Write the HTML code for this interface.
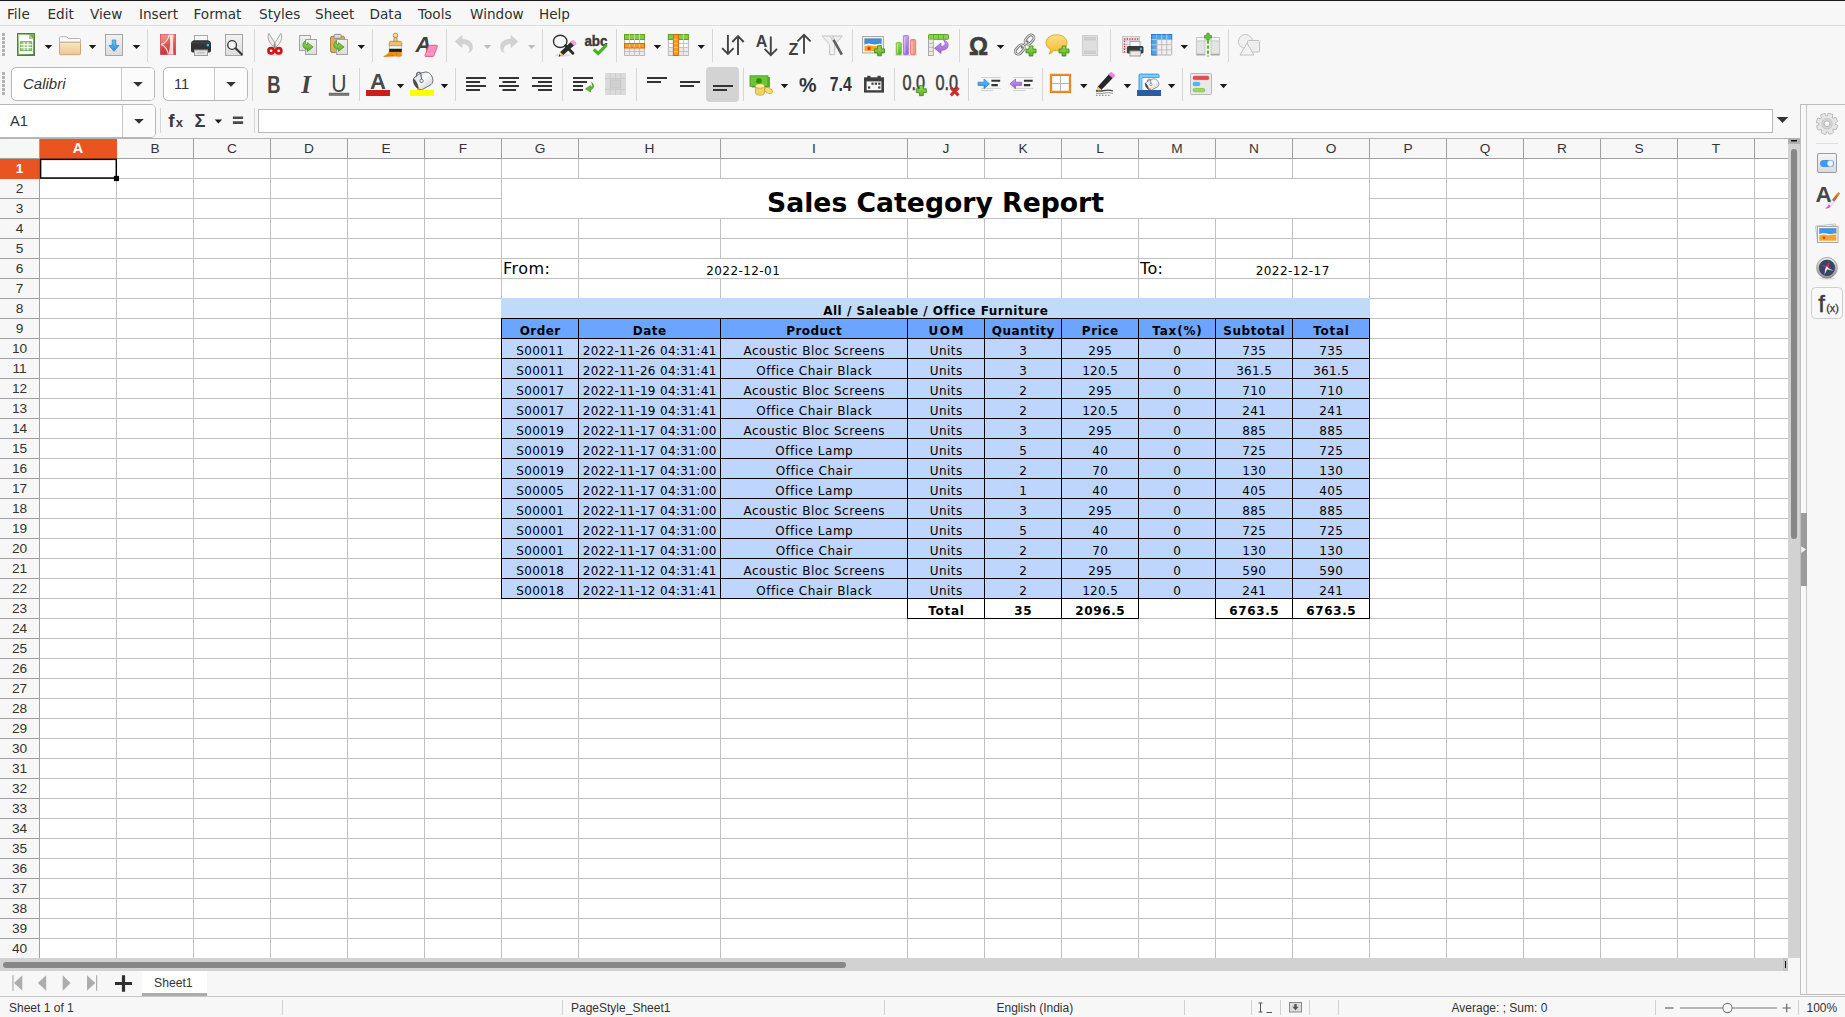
<!DOCTYPE html>
<html lang="en"><head><meta charset="utf-8"><title>Sales Category Report - LibreOffice Calc</title>
<style>
*{box-sizing:border-box}
html,body{margin:0;padding:0}
body{width:1845px;height:1017px;overflow:hidden;background:#f7f7f7;position:relative;font-family:'DejaVu Sans','Liberation Sans',sans-serif;color:#333;font-size:13.5px}
.a{position:absolute}
.menu span{position:absolute;top:5px;font-size:13.6px;line-height:18px;color:#303030;white-space:nowrap}
.vl{position:absolute;width:1px;background:#c0c0c0}
.hl{position:absolute;height:1px;background:#c0c0c0}
.ch{position:absolute;top:139px;height:19px;line-height:19px;text-align:center;font-size:13.7px;color:#333;font-family:'Liberation Sans','DejaVu Sans',sans-serif}
.rh{position:absolute;left:0;width:39px;height:19px;line-height:19px;text-align:center;font-size:13.7px;color:#333;font-family:'Liberation Sans','DejaVu Sans',sans-serif}
.c{position:absolute;font-family:'DejaVu Sans','Liberation Sans',sans-serif;font-size:12px;color:#000;text-align:center;white-space:nowrap;line-height:19px;height:19px}
.b{font-weight:bold}
.sep{position:absolute;width:1px;background:#d4d4d4}
.sb{position:absolute;top:998px;height:20px;line-height:20px;font-size:12px;color:#333;white-space:nowrap;font-family:'Liberation Sans','DejaVu Sans',sans-serif}
.bx{position:absolute;font-family:'Liberation Sans','DejaVu Sans',sans-serif;font-size:14.67px;line-height:20px;color:#333;white-space:nowrap}
.sbs{position:absolute;top:1000px;height:15px;width:1px;background:#d0d0d0}

</style></head><body>
<div class="a" style="left:0;top:0;width:1845px;height:1px;background:#1a1a1a"></div>
<div class="menu">
<span style="left:7px">File</span>
<span style="left:47.5px">Edit</span>
<span style="left:90px">View</span>
<span style="left:139px">Insert</span>
<span style="left:193.5px">Format</span>
<span style="left:259px">Styles</span>
<span style="left:315px">Sheet</span>
<span style="left:369.5px">Data</span>
<span style="left:418px">Tools</span>
<span style="left:470px">Window</span>
<span style="left:539px">Help</span>
</div>
<div class="a" style="left:0;top:25px;width:1845px;height:1px;background:#dcdcdc"></div>
<div class="a" style="left:11px;top:67px;width:144px;height:34px;border:1px solid #b8b8b8;border-radius:5px;background:#fff"></div>
<div class="a" style="left:121px;top:68px;width:1px;height:32px;background:#c8c8c8"></div>
<div class="a" style="left:122px;top:68px;width:32px;height:32px;background:#fbfbfb;border-radius:0 4px 4px 0"></div>
<div class="bx" style="left:23px;top:74px;font-style:italic;font-size:15px">Calibri</div>
<div class="a" style="left:163px;top:67px;width:85px;height:34px;border:1px solid #b8b8b8;border-radius:5px;background:#fff"></div>
<div class="a" style="left:214px;top:68px;width:1px;height:32px;background:#c8c8c8"></div>
<div class="a" style="left:215px;top:68px;width:32px;height:32px;background:#fbfbfb;border-radius:0 4px 4px 0"></div>
<div class="bx" style="left:174px;top:74px">11</div>
<div class="a" style="left:-4px;top:104px;width:160px;height:34px;border:1px solid #b8b8b8;border-radius:5px;background:#fff"></div>
<div class="a" style="left:122px;top:105px;width:1px;height:32px;background:#c8c8c8"></div>
<div class="a" style="left:123px;top:105px;width:32px;height:32px;background:#fbfbfb;border-radius:0 4px 4px 0"></div>
<div class="bx" style="left:10px;top:111px">A1</div>
<div class="a" style="left:258px;top:109px;width:1515px;height:24px;border:1px solid #b8b8b8;background:#fff"></div>
<svg class="a" style="left:0;top:26px" width="1300" height="38" viewBox="0 26 1300 38"><defs>
<linearGradient id="gDoc" x1="0" y1="0" x2="0" y2="1"><stop offset="0" stop-color="#f2f2f2"/><stop offset="1" stop-color="#dcdcdc"/></linearGradient>
<linearGradient id="gFold" x1="0" y1="0" x2="0" y2="1"><stop offset="0" stop-color="#f9e6c6"/><stop offset="1" stop-color="#ecc790"/></linearGradient>
<linearGradient id="gPdf" x1="0" y1="0" x2="0" y2="1"><stop offset="0" stop-color="#f27a63"/><stop offset="1" stop-color="#c8323f"/></linearGradient>
<linearGradient id="gGrn" x1="0" y1="0" x2="0" y2="1"><stop offset="0" stop-color="#9bdc5a"/><stop offset="1" stop-color="#5aae22"/></linearGradient>
<linearGradient id="gBub" x1="0" y1="0" x2="0" y2="1"><stop offset="0" stop-color="#fbe08a"/><stop offset="1" stop-color="#f3b728"/></linearGradient>
<linearGradient id="gBlu" x1="0" y1="0" x2="0" y2="1"><stop offset="0" stop-color="#6cc4f6"/><stop offset="1" stop-color="#2f8cdc"/></linearGradient>
<linearGradient id="gNew" x1="0" y1="0" x2="1" y2="1"><stop offset="0" stop-color="#a3cc90"/><stop offset="1" stop-color="#4f8a3c"/></linearGradient>
<linearGradient id="gPur" x1="0" y1="0" x2="0" y2="1"><stop offset="0" stop-color="#c9a0f0"/><stop offset="1" stop-color="#9a5fd6"/></linearGradient>
<linearGradient id="gMet" x1="0" y1="0" x2="1" y2="1"><stop offset="0" stop-color="#c9ccd0"/><stop offset="0.450" stop-color="#fbfbfb"/><stop offset="1" stop-color="#c3c6ca"/></linearGradient>
<g id="plus"><path d="M3.6 0.5h3.8v3.1h3.1v3.8h-3.1v3.1h-3.8v-3.1h-3.1v-3.8h3.1z" fill="url(#gGrn)" stroke="#3f8d17" stroke-width="0.9"/></g>
</defs><rect x="2" y="33" width="3" height="3" fill="#b4b4b4"/><rect x="2" y="37" width="3" height="3" fill="#b4b4b4"/><rect x="2" y="41" width="3" height="3" fill="#b4b4b4"/><rect x="2" y="45" width="3" height="3" fill="#b4b4b4"/><rect x="2" y="49" width="3" height="3" fill="#b4b4b4"/><rect x="2" y="53" width="3" height="3" fill="#b4b4b4"/><g transform="translate(14 32)"><rect x="3.500" y="1.500" width="17" height="22" fill="url(#gNew)" stroke="#4d8339"/><path d="M4.900 2.900h10.200l4 4v15.200h-14.200z" fill="#fff"/><path d="M15.100 2.900l4 4h-4z" fill="#9cc98a"/><rect x="6.300" y="9.700" width="11.400" height="8.800" fill="#9ccd85" stroke="#6aa551" stroke-width="0.900"/><path d="M6.300 12.700h11.400M6.300 15.600h11.400M10.100 10v8.500M13.900 10v8.500" stroke="#fff" stroke-width="1"/></g><g transform="translate(58 32)"><path d="M1.500 10.500v-4.800q0-1 1-1h6.300l1.500 1.800h11.200q1 0 1 1v3z" fill="#f8f8f8" stroke="#b5b5b5"/><rect x="1.500" y="10.200" width="21" height="12.500" rx="1" fill="url(#gFold)" stroke="#c9a66e"/></g><g transform="translate(102 32)"><rect x="3.500" y="2.500" width="17" height="21" fill="url(#gDoc)" stroke="#a6a6a6"/><path d="M10.200 8h3.600v5.500h3.200l-5 5.800-5-5.800h3.200z" fill="url(#gBlu)" stroke="#2a7cc4" stroke-width="0.700"/></g><g transform="translate(156 32)"><rect x="4.300" y="2.300" width="15.400" height="20.400" fill="url(#gPdf)" stroke="#c9414e" stroke-width="0.600"/><path d="M13.400 2.600c1.200 6.500 1 13.500-1 19.800h5.200c-0.700-6.500-0.700-13.300 0-19.800z" fill="#fff" opacity="0.800"/><path d="M5 12.600c4-1.300 7.300-5 8.300-10M5 12.600c3.700 1.300 6.500 5 7.300 9.800" stroke="#fff" stroke-width="1.100" fill="none" opacity="0.850"/><path d="M5 12.600c4-1.300 7.300-5 8.300-10l-8.300 0z" fill="#fff" opacity="0.180"/></g><g transform="translate(189 32)"><rect x="5.500" y="3.500" width="13" height="7" fill="#f7f7f7" stroke="#a9a9a9"/><path d="M2 11.200q0-1.800 1.800-2.400l1.200-0.600h14l1.200 0.600q1.800 0.600 1.800 2.400v7.500q0 1.800-1.800 1.800h-16.400q-1.800 0-1.800-1.800z" fill="#333"/><path d="M3 10.800h18" stroke="#555" stroke-width="0.800"/><rect x="17.700" y="12" width="2.300" height="2.300" fill="#29c6f0"/><rect x="5.500" y="18" width="13" height="5.500" fill="#e4e4e4" stroke="#9c9c9c"/><path d="M8.500 20.800h7" stroke="#b0b0b0" stroke-width="1"/></g><g transform="translate(222 32)"><rect x="3.500" y="2.500" width="17" height="21" fill="url(#gDoc)" stroke="#a6a6a6"/><circle cx="10.100" cy="13" r="4.400" fill="#f3f3f3" stroke="#3e3e3e" stroke-width="1.400"/><path d="M13.500 16.300l6.200 6" stroke="#3a3a3a" stroke-width="2.200" stroke-linecap="round"/></g><g transform="translate(263 32)"><ellipse cx="12" cy="22.800" rx="8.500" ry="1.300" fill="#000" opacity="0.100"/><path d="M5.900 1.400c-2 4.500-0.300 9 5.200 14l2.200-2.200c-2.200-4-5.400-7.800-7.400-11.800z" fill="#ebebeb" stroke="#858585" stroke-width="0.700"/><path d="M17.900 1.400c2 4.500 0.300 9-5.200 14l-2.200-2.200c2.200-4 5.400-7.800 7.400-11.800z" fill="#f4f4f4" stroke="#858585" stroke-width="0.700"/><circle cx="8.100" cy="18.800" r="2.700" fill="#fff" stroke="#c9151b" stroke-width="2.600"/><circle cx="15.700" cy="18.800" r="2.700" fill="#fff" stroke="#c9151b" stroke-width="2.600"/><path d="M11.900 11.500v4.500" stroke="#777" stroke-width="1.300"/></g><g transform="translate(296 32)"><rect x="3.500" y="3.500" width="11" height="15" fill="url(#gDoc)" stroke="#a3a3a3"/><rect x="9.500" y="7.500" width="11" height="15" fill="url(#gDoc)" stroke="#a3a3a3"/><path d="M9.600 8.800C5.800 10.300 5.600 17 11.400 17.200v2.200l5.700-4.400-5.700-4.500v2.300c-2.400 0-3.100-1.900-1.800-4z" fill="url(#gGrn)" stroke="#3e8d18" stroke-width="0.700"/></g><g transform="translate(327 32)"><rect x="3.500" y="4.300" width="14" height="16.200" rx="1.500" fill="#dcaa62" stroke="#b0813f"/><rect x="7.200" y="2.300" width="7" height="4" rx="1" fill="#dcdcdc" stroke="#8f8f8f"/><rect x="9.500" y="7.500" width="11" height="15" fill="url(#gDoc)" stroke="#a3a3a3"/><path d="M9.600 8.800C5.800 10.300 5.600 17 11.400 17.200v2.200l5.700-4.400-5.700-4.500v2.300c-2.400 0-3.100-1.900-1.800-4z" fill="url(#gGrn)" stroke="#3e8d18" stroke-width="0.700"/></g><g transform="translate(381 32)"><path d="M8.200 19.600h12.600v4.600c-1.500 0.500-4 0.700-7 0.400-4-0.400-8 0.300-12.200 0.200 2.500-0.900 5-2.400 6.600-5.200z" fill="#f28c1c"/><path d="M3 24.300c4-0.600 7-0.800 10-0.600M11 21.500v2M15.500 21.200v2.400" stroke="#d96f05" stroke-width="0.700" fill="none"/><circle cx="14.500" cy="3.400" r="2.300" fill="#f4d59a" stroke="#b5853f" stroke-width="0.900"/><circle cx="14.500" cy="3.300" r="0.700" fill="#fff"/><path d="M13.100 5.300h2.800l0.300 4.200h-3.400z" fill="#f0c684" stroke="#b5853f" stroke-width="0.800"/><path d="M8.200 14v-3q0-1.700 1.700-1.700h9.200q1.700 0 1.700 1.700v3z" fill="#edbd74" stroke="#b5853f" stroke-width="0.800"/><rect x="8.200" y="13.900" width="12.600" height="3" fill="#f3f3f3" stroke="#9a9a9a" stroke-width="0.500"/><rect x="8.200" y="16.900" width="12.600" height="3" fill="#1e1e1e"/></g><g transform="translate(415 32)"><text x="0.500" y="19.800" font-family="Liberation Sans, DejaVu Sans, sans-serif" font-size="22" font-weight="bold" font-style="italic" fill="#404040">A</text><path d="M14.700 13.300h7q1 0 0.700 1l-3.400 9.300q-0.300 0.900-1.300 0.900h-7q-1 0-0.700-1l3.400-9.300q0.300-0.900 1.300-0.900z" fill="#f98fba" stroke="#e8488c" stroke-width="0.800"/><path d="M11 21.800h7.500" stroke="#fbb6d2" stroke-width="0.800"/></g><g transform="translate(452 32)"><path d="M2.800 9.500l7.500-6.700v4c6.500 0 11 3.500 10.500 9-0.300 3-2.300 5-5 5.400 1.800-1.500 2.300-4.400 0.500-6.700-1.300-1.700-3.500-2.500-6-2.500v4.200z" fill="#d2d2d2"/></g><g transform="translate(497 32)"><g transform="translate(24 0) scale(-1 1)"><path d="M2.800 9.500l7.500-6.700v4c6.500 0 11 3.500 10.500 9-0.300 3-2.300 5-5 5.400 1.800-1.500 2.300-4.400 0.500-6.700-1.300-1.700-3.500-2.500-6-2.500v4.200z" fill="#d2d2d2"/></g></g><g transform="translate(552 32)"><ellipse cx="11" cy="23.300" rx="8" ry="1.400" fill="#000" opacity="0.100"/><ellipse cx="8.200" cy="9.400" rx="6.700" ry="6.100" fill="#f6f6f6" fill-opacity="0.700" stroke="#333" stroke-width="1.400"/><path d="M13.600 13.800l7.300 7.500" stroke="#2e2e2e" stroke-width="2.900" stroke-linecap="round"/><path d="M18.600 10.100l3.500 3.400-10.800 9.400-4.600 1.700 1.600-4.700z" fill="#2b2b2b"/><path d="M18.600 10.100l1.400-1.300q0.800-0.700 1.600 0l2 1.800q0.700 0.800 0 1.600l-1.500 1.300z" fill="#f5a3dc" stroke="#d76bb8" stroke-width="0.500"/><path d="M6.700 24.600l1.600-4.700 3 3z" fill="#f3d27a"/><path d="M6.700 24.600l0.700-2 1.300 1.300z" fill="#222"/></g><g transform="translate(584 32)"><text x="0.400" y="14.400" font-family="Liberation Sans, DejaVu Sans, sans-serif" font-size="15" font-weight="bold" fill="#3a3a3a" stroke="#3a3a3a" stroke-width="0.450" textLength="23" lengthAdjust="spacingAndGlyphs">abc</text><path d="M9.800 17.300l4.300 4.300 8.500-8.700" stroke="#4caf24" stroke-width="3.100" fill="none"/></g><g transform="translate(622.5 32)"><rect x="2" y="2.500" width="20" height="21" fill="#fdfdfd" stroke="#b9b9b9"/><rect x="2" y="2.500" width="20" height="5" fill="#84cc48" stroke="#5aa424"/><rect x="2.500" y="16" width="19" height="7" fill="#e9e9e9"/><path d="M7 2.500v21M12 2.500v21M17 2.500v21M2 11.500h20M2 15.500h20M2 19.500h20" stroke="#bdbdbd" stroke-width="0.900" fill="none"/><path d="M7 2.500v5M12 2.500v5M17 2.500v5" stroke="#b7e58e" stroke-width="0.900"/><rect x="2" y="11.500" width="20" height="4.500" fill="#f79a2e" stroke="#d56a00"/><path d="M7 12v3.500M12 12v3.500M17 12v3.500" stroke="#fbc98a" stroke-width="0.900"/></g><g transform="translate(666.4 32)"><rect x="2" y="2.500" width="20" height="21" fill="#fdfdfd" stroke="#b9b9b9"/><rect x="2" y="2.500" width="20" height="5" fill="#84cc48" stroke="#5aa424"/><rect x="2.500" y="16" width="19" height="7" fill="#e9e9e9"/><path d="M7 2.500v21M12 2.500v21M17 2.500v21M2 11.500h20M2 15.500h20M2 19.500h20" stroke="#bdbdbd" stroke-width="0.900" fill="none"/><path d="M7 2.500v5M12 2.500v5M17 2.500v5" stroke="#b7e58e" stroke-width="0.900"/><rect x="7" y="2.500" width="5" height="21" fill="#f79a2e" stroke="#d56a00"/><path d="M7.500 7.500h4M7.500 11.500h4M7.500 15.500h4M7.500 19.500h4" stroke="#fbc98a" stroke-width="0.900"/></g><g transform="translate(721 32)"><path d="M6.900 3v18.800M1.200 16.200l5.700 5.800 5.700-5.800M17 23v-18.800M11.300 10l5.700-5.800 5.700 5.800" stroke="#434343" stroke-width="1.900" fill="none"/></g><g transform="translate(755 32)"><text x="0.700" y="14.900" font-family="Liberation Sans, DejaVu Sans, sans-serif" font-size="16" font-weight="bold" fill="#404040">A</text><path d="M15.800 4.500v18.500M9.600 16.900l6.200 6.300 6.200-6.300" stroke="#434343" stroke-width="1.900" fill="none"/></g><g transform="translate(788 32)"><text x="0.600" y="22.700" font-family="Liberation Sans, DejaVu Sans, sans-serif" font-size="16" font-weight="bold" fill="#404040">Z</text><path d="M16 21.800v-18.500M9.400 9.400l6.600-6.600 6.600 6.600" stroke="#434343" stroke-width="1.900" fill="none"/></g><g transform="translate(820 32)"><path d="M2 4h20.300l-7.600 8.500v10.200h-5.100v-10.200z" fill="#f1f1f1" stroke="#c2c2c2"/><path d="M11.300 3.800l10.500 18.900" stroke="#5f5f5f" stroke-width="2.700"/><path d="M10.900 3.300l2.600 4.600" stroke="#dcdcdc" stroke-width="2.800"/></g><g transform="translate(861 32)"><rect x="1.500" y="4.500" width="21" height="16.500" fill="#f0f0f0" stroke="#a9a9a9"/><rect x="3.500" y="6.500" width="17" height="12.500" fill="#f4a62e"/><path d="M3.500 6.500h17v5.800c-3-1.500-5 1-8 0.300s-5-1.800-9 0.200z" fill="#3b8fe3"/><path d="M3.500 12.800c4-2 6-0.900 9-0.200s5-1.800 8-0.300v1.300c-3-1.200-5 1-8 0.300s-5-1.300-9 0.400z" fill="#fff"/><path d="M8 14l0.700 1.600 1.700 0.100-1.300 1.100 0.400 1.700-1.500-0.900-1.500 0.900 0.400-1.700-1.300-1.100 1.700-0.100z" fill="#e1261c"/><use href="#plus" x="13" y="13.300"/></g><g transform="translate(894 32)"><path d="M0.500 23.200h23" stroke="#d4d4d4" stroke-width="0.900"/><rect x="2.200" y="10.500" width="5.200" height="12.200" rx="1" fill="url(#gGrn)" stroke="#74c03a" stroke-width="0.800"/><rect x="9.400" y="3.500" width="5.200" height="19.200" rx="1" fill="url(#gPur)" stroke="#a472dc" stroke-width="0.800"/><rect x="16.500" y="7.500" width="5.200" height="15.200" rx="1" fill="#f19a8a" stroke="#e0705c" stroke-width="0.800"/><path d="M3.600 12v9.500M10.800 5v16.500M17.900 9v12.500" stroke="#fff" stroke-opacity="0.450" stroke-width="1.200"/></g><g transform="translate(926.5 32)"><rect x="2" y="2.500" width="20" height="4.800" rx="0.800" fill="#8ad24e" stroke="#5aa424"/><path d="M7 2.500v4.800M12 2.500v4.800M17 2.500v4.800" stroke="#5aa424" stroke-width="0.800"/><rect x="2" y="7.300" width="4.800" height="16.200" fill="#eceae4" stroke="#aaa"/><path d="M2 11.300h4.800M2 15.300h4.800M2 19.300h4.800" stroke="#aaa" stroke-width="0.800"/><path d="M17 8.300c4.500 0.700 6 5 3.500 8-1.500 1.600-3.500 2-6 2v3.200l-6.500-5.200 6.500-5.200v3.200c2 0 3.600-0.400 4-2 0.300-1.500-0.300-3-1.500-4z" fill="url(#gPur)" stroke="#8b55c9" stroke-width="0.700"/></g><g transform="translate(966.5 32)"><text x="12.100" y="23.200" text-anchor="middle" font-family="Liberation Sans, DejaVu Sans, sans-serif" font-size="26.500" font-weight="bold" fill="#3e3e3e" stroke="#3e3e3e" stroke-width="0.700" textLength="19" lengthAdjust="spacingAndGlyphs">Ω</text></g><g transform="translate(1013 32)"><g fill="none" stroke="#777" stroke-width="2.700" stroke-linecap="round"><rect x="-3" y="-5.200" width="6" height="10.400" rx="3" transform="translate(16.500 7.600) rotate(42)"/><rect x="-3" y="-5.200" width="6" height="10.400" rx="3" transform="translate(6.800 17.600) rotate(42)"/><path d="M9.300 15l4.800-5" stroke-width="3.200"/></g><g fill="none" stroke="#d9d9d9" stroke-width="1.100"><rect x="-3" y="-5.200" width="6" height="10.400" rx="3" transform="translate(16.500 7.600) rotate(42)"/><rect x="-3" y="-5.200" width="6" height="10.400" rx="3" transform="translate(6.800 17.600) rotate(42)"/><path d="M9.600 14.700l4.300-4.500"/></g><use href="#plus" x="12.500" y="13.500"/></g><g transform="translate(1045.5 32)"><path d="M11 2.800c6 0 10.500 3.400 10.500 8s-4.500 8-10.500 8c-1 0-2-0.100-2.900-0.300-1 1.800-2.600 3-4.600 3.600 1-1.400 1.500-3 1.400-4.700-2.700-1.500-4.400-3.900-4.400-6.600 0-4.600 4.500-8 10.500-8z" fill="url(#gBub)" stroke="#dba41c" stroke-width="0.900"/><use href="#plus" x="13" y="13.500"/></g><g transform="translate(1078 32)"><rect x="4.500" y="3.500" width="15" height="20" fill="#dedede" stroke="#cdcdcd"/><rect x="6.500" y="5.500" width="11" height="2.500" fill="#d0d0d0" stroke="#c2c2c2" stroke-width="0.600"/><rect x="6.500" y="19" width="11" height="2.500" fill="#d0d0d0" stroke="#c2c2c2" stroke-width="0.600"/></g><g transform="translate(1120.5 32)"><rect x="2" y="4.500" width="17" height="16" fill="#ececec" stroke="#c4c4c4"/><path d="M2 8.500h17M2 12.500h17M2 16.500h17M6.500 4.500v16M11 4.500v16M15.500 4.500v16" stroke="#cdcdcd" stroke-width="0.800"/><path d="M4 20.500v-13.500h14" stroke="#e02020" stroke-width="1.300" stroke-dasharray="1.300 1.300" fill="none"/><rect x="9.500" y="9.500" width="10" height="5.500" fill="#f7f7f7" stroke="#a9a9a9"/><rect x="6.500" y="14" width="16.500" height="7.500" rx="1.500" fill="#3a3a3a"/><rect x="19.500" y="15.800" width="2" height="2" fill="#29c6f0"/><rect x="9.500" y="19" width="10.500" height="5" fill="#e9e9e9" stroke="#9c9c9c"/></g><g transform="translate(1149.7 32)"><rect x="2" y="2.500" width="20" height="20.500" rx="0.800" fill="#f0f0f0" stroke="#b4b4b4"/><rect x="2" y="2.500" width="20" height="5" fill="#4fa4ec" stroke="#2b79c6"/><rect x="2" y="2.500" width="5" height="20.500" fill="#4fa4ec" stroke="#2b79c6"/><path d="M7 7.500v15.500M12 2.500v20.500M17 2.500v20.500M2 7.500h20M2 12.700h20M2 17.900h20" stroke="#b9b9b9" stroke-width="0.900"/><path d="M12 2.500v5M17 2.500v5M7 2.500v5M2 12.700h5M2 17.900h5M2 7.500h5" stroke="#95ccf8" stroke-width="0.900"/></g><g transform="translate(1196 32)"><rect x="0.500" y="5.500" width="8.500" height="17.500" fill="#e4e4e4" stroke="#c6c6c6"/><rect x="15" y="5.500" width="8.500" height="17.500" fill="#e4e4e4" stroke="#c6c6c6"/><rect x="0.500" y="5.500" width="8.500" height="3.500" fill="#f4f4f4" stroke="#c6c6c6"/><rect x="15" y="5.500" width="8.500" height="3.500" fill="#f4f4f4" stroke="#c6c6c6"/><path d="M0.500 22.500h8.500M15 22.500h8.500" stroke="#a8a8a8" stroke-width="1.400"/><path d="M12 8.500v16" stroke="#5db82a" stroke-width="2.200" stroke-dasharray="3.200 1.800"/><path d="M10.800 1.200h2.400v2.300h2.300v2.400h-2.300v2.300h-2.400v-2.300h-2.300v-2.400h2.300z" fill="#6cc534" stroke="#3f8d17" stroke-width="0.700"/></g><g transform="translate(1237 32)"><circle cx="8.500" cy="9.500" r="7" fill="#f1f1f1" stroke="#c0c0c0"/><rect x="10.500" y="8.500" width="12" height="11.500" rx="1" fill="#eeeeee" stroke="#c0c0c0"/><path d="M10 11l7 12h-14z" fill="#f3f3f3" stroke="#c0c0c0"/></g><path d="M44.8 44.9h7.4l-3.7 4.2z" fill="#1a1a1a"/><path d="M88.8 44.9h7.4l-3.7 4.2z" fill="#1a1a1a"/><path d="M132.8 44.9h7.4l-3.7 4.2z" fill="#1a1a1a"/><path d="M357.6 44.9h7.4l-3.7 4.2z" fill="#1a1a1a"/><path d="M653.6999999999999 44.9h7.4l-3.7 4.2z" fill="#1a1a1a"/><path d="M697.5 44.9h7.4l-3.7 4.2z" fill="#1a1a1a"/><path d="M996.9 44.9h7.4l-3.7 4.2z" fill="#1a1a1a"/><path d="M1180.6 44.9h7.4l-3.7 4.2z" fill="#1a1a1a"/><path d="M483.8 44.9h7.4l-3.7 4.2z" fill="#bdbdbd"/><path d="M527.9 44.9h7.4l-3.7 4.2z" fill="#bdbdbd"/><rect x="147" y="29" width="1" height="33" fill="#d6d6d6"/><rect x="254" y="29" width="1" height="33" fill="#d6d6d6"/><rect x="372" y="29" width="1" height="33" fill="#d6d6d6"/><rect x="446" y="29" width="1" height="33" fill="#d6d6d6"/><rect x="542" y="29" width="1" height="33" fill="#d6d6d6"/><rect x="616" y="29" width="1" height="33" fill="#d6d6d6"/><rect x="712" y="29" width="1" height="33" fill="#d6d6d6"/><rect x="852" y="29" width="1" height="33" fill="#d6d6d6"/><rect x="959" y="29" width="1" height="33" fill="#d6d6d6"/><rect x="1110" y="29" width="1" height="33" fill="#d6d6d6"/><rect x="1228" y="29" width="1" height="33" fill="#d6d6d6"/></svg>
<svg class="a" style="left:0;top:64px" width="1300" height="40" viewBox="0 64 1300 40"><rect x="2" y="72" width="3" height="3" fill="#b4b4b4"/><rect x="2" y="76" width="3" height="3" fill="#b4b4b4"/><rect x="2" y="80" width="3" height="3" fill="#b4b4b4"/><rect x="2" y="84" width="3" height="3" fill="#b4b4b4"/><rect x="2" y="88" width="3" height="3" fill="#b4b4b4"/><rect x="2" y="92" width="3" height="3" fill="#b4b4b4"/><rect x="706" y="67" width="33" height="35" rx="4" fill="#d3d3d3"/><text transform="translate(273.800 92.900) scale(0.800 1)" text-anchor="middle" font-family="Liberation Sans, DejaVu Sans, sans-serif" font-size="23" font-weight="bold" fill="#444">B</text><text x="306" y="92.900" text-anchor="middle" font-family="Liberation Serif, DejaVu Serif, serif" font-size="25" font-weight="bold" font-style="italic" fill="#444">I</text><text transform="translate(339 91.500) scale(0.920 1)" text-anchor="middle" font-family="Liberation Sans, DejaVu Sans, sans-serif" font-size="23" fill="#444">U</text><rect x="329" y="93" width="20" height="2.600" fill="#777" stroke="#555" stroke-width="0.400"/><text x="378" y="88.800" text-anchor="middle" font-family="Liberation Sans, DejaVu Sans, sans-serif" font-size="22" font-weight="bold" fill="#4a4a4a">A</text><rect x="366" y="90" width="24" height="6" fill="#cc1d1d"/><path d="M396.8 84.0h7.4l-3.7 4.2z" fill="#1a1a1a"/><g transform="translate(412 71)"><path d="M1.400 8C4 4 9 1.500 13.500 1c4-0.200 7.500 4 7.400 8.600-0.100 2.400-1.400 3.900-2.900 4.600l-7.500 4.100c-1.500 0.500-3.500 0.200-4.200-0.500z" fill="url(#gMet)" stroke="#5a606c" stroke-width="0.900"/><path d="M1.400 8c-0.900 2 1.100 8 4.900 9.800 0.200-2.800-1.800-8.300-4.900-9.800z" fill="#4a4d55" stroke="#3a3d44" stroke-width="0.500"/><path d="M4.500 5.500c-0.700-4 3-6 4.300-2.500l0.700 5" fill="none" stroke="#5a606c" stroke-width="1.100"/><circle cx="9.500" cy="9.900" r="1.700" fill="#fff" stroke="#5a606c" stroke-width="0.900"/></g><path d="M417.300 90.300c0-1.500 0.600-2.300 1.100-3.800 0.600 1.300 1.200 2.300 1.200 3.800z" fill="#f5821e"/><rect x="410" y="90" width="24" height="6" fill="#ffff00"/><path d="M440.8 84.0h7.4l-3.7 4.2z" fill="#1a1a1a"/><path d="M466 78H486M466 82H480M466 86H486M466 90H480" stroke="#333" stroke-width="1.8" fill="none"/><path d="M499 78H519M502.5 82H516M499 86H519M502.5 90H516" stroke="#333" stroke-width="1.8" fill="none"/><path d="M532 78H552M538 82H552M532 86H552M538 90H552" stroke="#333" stroke-width="1.8" fill="none"/><path d="M573 78H593M573 82H587M573 86H583M573 90H583" stroke="#333" stroke-width="1.8" fill="none"/><path d="M591.500 82.500c3 2 3 6-1 7.500v2l-5-3.200 5-3.200v2c2-0.600 2.500-3 1-5.100z" fill="#62b82e" stroke="#3e8d18" stroke-width="0.600"/><rect x="605" y="73" width="21" height="22" rx="1" fill="#dadada"/><path d="M610.200 73v22M615.500 73v7M615.500 89v6M620.800 73v22M605 78.500h21M605 89.500h21" stroke="#cbcbcb" stroke-width="0.900"/><rect x="610.500" y="80" width="10" height="8" fill="#d0d0d0" stroke="#c4c4c4" stroke-width="0.700"/><path d="M647 78H667M647 82H661" stroke="#333" stroke-width="1.8" fill="none"/><path d="M680 82H700M680 86H694" stroke="#333" stroke-width="1.8" fill="none"/><path d="M713 86H733M713 90H727" stroke="#333" stroke-width="1.8" fill="none"/><rect x="752" y="77" width="18" height="10.500" fill="#58b52a"/><rect x="750" y="75.800" width="18" height="10.500" fill="#6cc63a" stroke="#3f9618" stroke-width="0.800"/><ellipse cx="759" cy="81" rx="2.800" ry="3" fill="#2f8f14"/><ellipse cx="768.500" cy="90.500" rx="4.200" ry="2.600" transform="rotate(25 768.500 90.500)" fill="#f4dc7a" stroke="#c9a227" stroke-width="0.800"/><path d="M755.500 86v7c0 1.300 2 2.200 4.500 2.200s4.500-0.900 4.500-2.200v-7z" fill="#f0d468" stroke="#c9a227" stroke-width="0.800"/><ellipse cx="760" cy="86" rx="4.500" ry="2.200" fill="#fbeea5" stroke="#c9a227" stroke-width="0.800"/><path d="M780.8 84.0h7.4l-3.7 4.2z" fill="#1a1a1a"/><text x="807.700" y="91.500" text-anchor="middle" font-family="Liberation Sans, DejaVu Sans, sans-serif" font-size="21" font-weight="bold" fill="#333" textLength="17.600" lengthAdjust="spacingAndGlyphs">%</text><text x="829.700" y="91" font-family="Liberation Sans, DejaVu Sans, sans-serif" font-size="19.500" font-weight="bold" fill="#333" textLength="22" lengthAdjust="spacingAndGlyphs">7.4</text><path d="M864 77.300h20v15.300h-20z" fill="#3f3f3f"/><rect x="867.300" y="75.800" width="3.200" height="2.500" fill="#3f3f3f"/><rect x="877.500" y="75.800" width="3.200" height="2.500" fill="#3f3f3f"/><rect x="866.600" y="81.400" width="14.800" height="8.800" fill="#f7f7f7"/><rect x="871.400" y="82.600" width="2.200" height="2.200" fill="#3f3f3f"/><rect x="874.800" y="82.600" width="2.200" height="2.200" fill="#3f3f3f"/><rect x="878.200" y="82.600" width="2.200" height="2.200" fill="#3f3f3f"/><rect x="868" y="86.400" width="2.200" height="2.200" fill="#3f3f3f"/><rect x="878.200" y="86.400" width="2.200" height="2.200" fill="#3f3f3f"/><text x="902.4" y="90.300" font-family="Liberation Sans, DejaVu Sans, sans-serif" font-size="22.500" fill="#3c3c3c" stroke="#3c3c3c" stroke-width="0.550" textLength="22.500" lengthAdjust="spacingAndGlyphs">0.0</text><text x="935.4" y="90.300" font-family="Liberation Sans, DejaVu Sans, sans-serif" font-size="22.500" fill="#3c3c3c" stroke="#3c3c3c" stroke-width="0.550" textLength="22.500" lengthAdjust="spacingAndGlyphs">0.0</text><use href="#plus" x="915.800" y="85.200"/><path d="M950.800 87.600l7.700 7.700M958.500 87.600l-7.700 7.700" stroke="#cf2b2b" stroke-width="3.100"/><path d="M981 77.5H1000.5M981 88.4H1000.5M981 90.5H993" stroke="#c9c9c9" stroke-width="0.9" fill="none"/><path d="M978 82.200h6v-3.200l5.500 4.800-5.500 4.800v-3.200h-6z" fill="url(#gBlu)" stroke="#2a7cc4" stroke-width="0.700"/><path d="M991.4 80.8H1000.2M991.4 85.1H997.8" stroke="#333" stroke-width="2.1" fill="none"/><path d="M1013.5 77.5H1033M1013.5 88.4H1033M1013.5 90.5H1025.5" stroke="#c9c9c9" stroke-width="0.9" fill="none"/><path d="M1021.500 82.200h-6v-3.200l-5.500 4.800 5.500 4.800v-3.200h6z" fill="url(#gPur)" stroke="#8b55c9" stroke-width="0.700"/><path d="M1023.9 80.8H1032.7M1023.9 85.1H1030.3" stroke="#333" stroke-width="2.1" fill="none"/><rect x="1051" y="74.900" width="19" height="17" fill="#fafafa" stroke="#e2720a" stroke-width="2.200"/><rect x="1051" y="74.900" width="19" height="17" fill="none" stroke="#f9b868" stroke-width="0.600"/><path d="M1060.500 76v15M1052 83.500h17" stroke="#b4b4b4" stroke-width="1"/><path d="M1080.1 84.0h7.4l-3.7 4.2z" fill="#1a1a1a"/><path d="M1108.700 74.600l4.100 3.400-11.300 11.800-5.300 2 1.700-5.400z" fill="#262626"/><path d="M1108.700 74.600l1.600-1.800q0.800-0.700 1.600 0l2.500 2q0.700 0.700 0.100 1.500l-1.700 1.700z" fill="#ee82e6" stroke="#c050b8" stroke-width="0.400"/><path d="M1096.200 91.800l1.700-5.400 3.600 3.400z" fill="#f1d37a"/><path d="M1096.200 91.800l0.600-1.900 1.300 1.200z" fill="#222"/><path d="M1096 90.500c6 2.500 10-2.500 17 0.500" stroke="#444" stroke-width="1.100" fill="none"/><path d="M1096 93c6 2 10-2 17 0.500" stroke="#888" stroke-width="0.900" fill="none"/><path d="M1096 95.300h14" stroke="#777" stroke-width="1" stroke-dasharray="1.500 1.500"/><path d="M1123.7 84.0h7.4l-3.7 4.2z" fill="#1a1a1a"/><path d="M1139 90.500v-15.200q0-1.200 1.200-1.200h17.600q1.200 0 1.200 1.200v2.400h-16.700v13.100z" fill="#7fcdfb" stroke="#2384d2" stroke-width="0.800"/><rect x="1142.500" y="78" width="17" height="12" fill="#fff"/><g transform="translate(1144.3 78.2)"><g transform="scale(0.700 0.640)"><path d="M1.400 8C4 4 9 1.500 13.500 1c4-0.200 7.500 4 7.400 8.600-0.100 2.400-1.400 3.900-2.900 4.600l-7.500 4.100c-1.500 0.500-3.500 0.200-4.200-0.500z" fill="url(#gMet)" stroke="#5a606c" stroke-width="0.900"/><path d="M1.400 8c-0.900 2 1.100 8 4.900 9.800 0.200-2.800-1.800-8.300-4.900-9.800z" fill="#4a4d55" stroke="#3a3d44" stroke-width="0.500"/><path d="M4.500 5.500c-0.700-4 3-6 4.300-2.500l0.700 5" fill="none" stroke="#5a606c" stroke-width="1.100"/><circle cx="9.500" cy="9.900" r="1.700" fill="#fff" stroke="#5a606c" stroke-width="0.900"/></g></g><path d="M1148.200 90.200l0.300-1.600 1.900-0.400 0.300 2z" fill="#f26a10"/><rect x="1137" y="90" width="24" height="6" fill="#2a5d9e"/><path d="M1167.8999999999999 84.0h7.4l-3.7 4.2z" fill="#1a1a1a"/><rect x="1190.500" y="73.500" width="21" height="21" rx="1" fill="#e9e9e9" stroke="#b9b9b9"/><rect x="1193.200" y="76.200" width="15.500" height="3.400" rx="1.200" fill="#e84a4a" stroke="#c22" stroke-width="0.500"/><rect x="1193.200" y="82.300" width="6.500" height="3.400" rx="1.200" fill="#5ab8f0" stroke="#2a8ccc" stroke-width="0.500"/><rect x="1193.200" y="88.400" width="11.500" height="3.400" rx="1.200" fill="#96dc4e" stroke="#5aae22" stroke-width="0.500"/><path d="M1219.8 84.0h7.4l-3.7 4.2z" fill="#1a1a1a"/><path d="M133.2 81.89999999999999h9.6l-4.8 4.8z" fill="#333"/><path d="M226.2 81.89999999999999h9.6l-4.8 4.8z" fill="#333"/><rect x="252" y="68" width="1" height="33" fill="#d6d6d6"/><rect x="359" y="68" width="1" height="33" fill="#d6d6d6"/><rect x="455" y="68" width="1" height="33" fill="#d6d6d6"/><rect x="562" y="68" width="1" height="33" fill="#d6d6d6"/><rect x="636" y="68" width="1" height="33" fill="#d6d6d6"/><rect x="743" y="68" width="1" height="33" fill="#d6d6d6"/><rect x="894" y="68" width="1" height="33" fill="#d6d6d6"/><rect x="968" y="68" width="1" height="33" fill="#d6d6d6"/><rect x="1042" y="68" width="1" height="33" fill="#d6d6d6"/><rect x="1182" y="68" width="1" height="33" fill="#d6d6d6"/></svg>
<svg class="a" style="left:0;top:104px" width="1800" height="34" viewBox="0 104 1800 34"><path d="M134.2 118.89999999999999h9.6l-4.8 4.8z" fill="#333"/><rect x="160" y="108" width="1" height="25" fill="#d6d6d6"/><text x="168.300" y="126.800" font-family="Liberation Sans, DejaVu Sans, sans-serif" font-size="19" font-weight="bold" fill="#3a3a3a">f</text><text x="175.800" y="126.800" font-family="Liberation Sans, DejaVu Sans, sans-serif" font-size="13" font-weight="bold" fill="#3a3a3a">x</text><text x="194.500" y="126.800" font-family="Liberation Sans, DejaVu Sans, sans-serif" font-size="18.500" font-weight="bold" fill="#3a3a3a" textLength="11" lengthAdjust="spacingAndGlyphs">Σ</text><path d="M214.70000000000002 119.4h7.4l-3.7 4.2z" fill="#1a1a1a"/><path d="M232.900 117.700h10.200M232.900 122.600h10.200" stroke="#4a4a4a" stroke-width="2.600"/><rect x="254" y="108" width="1" height="25" fill="#d6d6d6"/><path d="M1776.75 117.0h11.5l-5.75 6z" fill="#333"/></svg>
<div class="a" style="left:40px;top:159px;width:1748px;height:799px;background:#fff"></div>
<div class="hl" style="left:0;top:138px;width:1788px;background:#b4b4b4"></div>
<div class="a" style="left:0;top:139px;width:1788px;height:19px;background:#f7f7f7"></div>
<div class="a" style="left:0;top:159px;width:39px;height:799px;background:#f7f7f7"></div>
<div class="vl" style="left:39px;top:139px;height:820px"></div>
<div class="vl" style="left:116px;top:139px;height:820px"></div>
<div class="vl" style="left:193px;top:139px;height:820px"></div>
<div class="vl" style="left:270px;top:139px;height:820px"></div>
<div class="vl" style="left:347px;top:139px;height:820px"></div>
<div class="vl" style="left:424px;top:139px;height:820px"></div>
<div class="vl" style="left:501px;top:139px;height:820px"></div>
<div class="vl" style="left:578px;top:139px;height:820px"></div>
<div class="vl" style="left:720px;top:139px;height:820px"></div>
<div class="vl" style="left:907px;top:139px;height:820px"></div>
<div class="vl" style="left:984px;top:139px;height:820px"></div>
<div class="vl" style="left:1061px;top:139px;height:820px"></div>
<div class="vl" style="left:1138px;top:139px;height:820px"></div>
<div class="vl" style="left:1215px;top:139px;height:820px"></div>
<div class="vl" style="left:1292px;top:139px;height:820px"></div>
<div class="vl" style="left:1369px;top:139px;height:820px"></div>
<div class="vl" style="left:1446px;top:139px;height:820px"></div>
<div class="vl" style="left:1523px;top:139px;height:820px"></div>
<div class="vl" style="left:1600px;top:139px;height:820px"></div>
<div class="vl" style="left:1677px;top:139px;height:820px"></div>
<div class="vl" style="left:1754px;top:139px;height:820px"></div>
<div class="hl" style="left:0;top:158px;width:1788px"></div>
<div class="hl" style="left:0;top:178px;width:1788px"></div>
<div class="hl" style="left:0;top:198px;width:1788px"></div>
<div class="hl" style="left:0;top:218px;width:1788px"></div>
<div class="hl" style="left:0;top:238px;width:1788px"></div>
<div class="hl" style="left:0;top:258px;width:1788px"></div>
<div class="hl" style="left:0;top:278px;width:1788px"></div>
<div class="hl" style="left:0;top:298px;width:1788px"></div>
<div class="hl" style="left:0;top:318px;width:1788px"></div>
<div class="hl" style="left:0;top:338px;width:1788px"></div>
<div class="hl" style="left:0;top:358px;width:1788px"></div>
<div class="hl" style="left:0;top:378px;width:1788px"></div>
<div class="hl" style="left:0;top:398px;width:1788px"></div>
<div class="hl" style="left:0;top:418px;width:1788px"></div>
<div class="hl" style="left:0;top:438px;width:1788px"></div>
<div class="hl" style="left:0;top:458px;width:1788px"></div>
<div class="hl" style="left:0;top:478px;width:1788px"></div>
<div class="hl" style="left:0;top:498px;width:1788px"></div>
<div class="hl" style="left:0;top:518px;width:1788px"></div>
<div class="hl" style="left:0;top:538px;width:1788px"></div>
<div class="hl" style="left:0;top:558px;width:1788px"></div>
<div class="hl" style="left:0;top:578px;width:1788px"></div>
<div class="hl" style="left:0;top:598px;width:1788px"></div>
<div class="hl" style="left:0;top:618px;width:1788px"></div>
<div class="hl" style="left:0;top:638px;width:1788px"></div>
<div class="hl" style="left:0;top:658px;width:1788px"></div>
<div class="hl" style="left:0;top:678px;width:1788px"></div>
<div class="hl" style="left:0;top:698px;width:1788px"></div>
<div class="hl" style="left:0;top:718px;width:1788px"></div>
<div class="hl" style="left:0;top:738px;width:1788px"></div>
<div class="hl" style="left:0;top:758px;width:1788px"></div>
<div class="hl" style="left:0;top:778px;width:1788px"></div>
<div class="hl" style="left:0;top:798px;width:1788px"></div>
<div class="hl" style="left:0;top:818px;width:1788px"></div>
<div class="hl" style="left:0;top:838px;width:1788px"></div>
<div class="hl" style="left:0;top:858px;width:1788px"></div>
<div class="hl" style="left:0;top:878px;width:1788px"></div>
<div class="hl" style="left:0;top:898px;width:1788px"></div>
<div class="hl" style="left:0;top:918px;width:1788px"></div>
<div class="hl" style="left:0;top:938px;width:1788px"></div>
<div class="hl" style="left:0;top:958px;width:1788px"></div>
<div class="vl" style="left:39px;top:139px;height:20px;background:#a0a0a0"></div>
<div class="vl" style="left:116px;top:139px;height:20px;background:#a0a0a0"></div>
<div class="vl" style="left:193px;top:139px;height:20px;background:#a0a0a0"></div>
<div class="vl" style="left:270px;top:139px;height:20px;background:#a0a0a0"></div>
<div class="vl" style="left:347px;top:139px;height:20px;background:#a0a0a0"></div>
<div class="vl" style="left:424px;top:139px;height:20px;background:#a0a0a0"></div>
<div class="vl" style="left:501px;top:139px;height:20px;background:#a0a0a0"></div>
<div class="vl" style="left:578px;top:139px;height:20px;background:#a0a0a0"></div>
<div class="vl" style="left:720px;top:139px;height:20px;background:#a0a0a0"></div>
<div class="vl" style="left:907px;top:139px;height:20px;background:#a0a0a0"></div>
<div class="vl" style="left:984px;top:139px;height:20px;background:#a0a0a0"></div>
<div class="vl" style="left:1061px;top:139px;height:20px;background:#a0a0a0"></div>
<div class="vl" style="left:1138px;top:139px;height:20px;background:#a0a0a0"></div>
<div class="vl" style="left:1215px;top:139px;height:20px;background:#a0a0a0"></div>
<div class="vl" style="left:1292px;top:139px;height:20px;background:#a0a0a0"></div>
<div class="vl" style="left:1369px;top:139px;height:20px;background:#a0a0a0"></div>
<div class="vl" style="left:1446px;top:139px;height:20px;background:#a0a0a0"></div>
<div class="vl" style="left:1523px;top:139px;height:20px;background:#a0a0a0"></div>
<div class="vl" style="left:1600px;top:139px;height:20px;background:#a0a0a0"></div>
<div class="vl" style="left:1677px;top:139px;height:20px;background:#a0a0a0"></div>
<div class="vl" style="left:1754px;top:139px;height:20px;background:#a0a0a0"></div>
<div class="vl" style="left:39px;top:139px;height:820px;background:#a0a0a0"></div>
<div class="hl" style="left:0;top:158px;width:1788px;background:#a0a0a0"></div>
<div class="hl" style="left:0;top:178px;width:40px;background:#a0a0a0"></div>
<div class="hl" style="left:0;top:198px;width:40px;background:#a0a0a0"></div>
<div class="hl" style="left:0;top:218px;width:40px;background:#a0a0a0"></div>
<div class="hl" style="left:0;top:238px;width:40px;background:#a0a0a0"></div>
<div class="hl" style="left:0;top:258px;width:40px;background:#a0a0a0"></div>
<div class="hl" style="left:0;top:278px;width:40px;background:#a0a0a0"></div>
<div class="hl" style="left:0;top:298px;width:40px;background:#a0a0a0"></div>
<div class="hl" style="left:0;top:318px;width:40px;background:#a0a0a0"></div>
<div class="hl" style="left:0;top:338px;width:40px;background:#a0a0a0"></div>
<div class="hl" style="left:0;top:358px;width:40px;background:#a0a0a0"></div>
<div class="hl" style="left:0;top:378px;width:40px;background:#a0a0a0"></div>
<div class="hl" style="left:0;top:398px;width:40px;background:#a0a0a0"></div>
<div class="hl" style="left:0;top:418px;width:40px;background:#a0a0a0"></div>
<div class="hl" style="left:0;top:438px;width:40px;background:#a0a0a0"></div>
<div class="hl" style="left:0;top:458px;width:40px;background:#a0a0a0"></div>
<div class="hl" style="left:0;top:478px;width:40px;background:#a0a0a0"></div>
<div class="hl" style="left:0;top:498px;width:40px;background:#a0a0a0"></div>
<div class="hl" style="left:0;top:518px;width:40px;background:#a0a0a0"></div>
<div class="hl" style="left:0;top:538px;width:40px;background:#a0a0a0"></div>
<div class="hl" style="left:0;top:558px;width:40px;background:#a0a0a0"></div>
<div class="hl" style="left:0;top:578px;width:40px;background:#a0a0a0"></div>
<div class="hl" style="left:0;top:598px;width:40px;background:#a0a0a0"></div>
<div class="hl" style="left:0;top:618px;width:40px;background:#a0a0a0"></div>
<div class="hl" style="left:0;top:638px;width:40px;background:#a0a0a0"></div>
<div class="hl" style="left:0;top:658px;width:40px;background:#a0a0a0"></div>
<div class="hl" style="left:0;top:678px;width:40px;background:#a0a0a0"></div>
<div class="hl" style="left:0;top:698px;width:40px;background:#a0a0a0"></div>
<div class="hl" style="left:0;top:718px;width:40px;background:#a0a0a0"></div>
<div class="hl" style="left:0;top:738px;width:40px;background:#a0a0a0"></div>
<div class="hl" style="left:0;top:758px;width:40px;background:#a0a0a0"></div>
<div class="hl" style="left:0;top:778px;width:40px;background:#a0a0a0"></div>
<div class="hl" style="left:0;top:798px;width:40px;background:#a0a0a0"></div>
<div class="hl" style="left:0;top:818px;width:40px;background:#a0a0a0"></div>
<div class="hl" style="left:0;top:838px;width:40px;background:#a0a0a0"></div>
<div class="hl" style="left:0;top:858px;width:40px;background:#a0a0a0"></div>
<div class="hl" style="left:0;top:878px;width:40px;background:#a0a0a0"></div>
<div class="hl" style="left:0;top:898px;width:40px;background:#a0a0a0"></div>
<div class="hl" style="left:0;top:918px;width:40px;background:#a0a0a0"></div>
<div class="hl" style="left:0;top:938px;width:40px;background:#a0a0a0"></div>
<div class="hl" style="left:0;top:958px;width:40px;background:#a0a0a0"></div>
<div class="a" style="left:40px;top:139px;width:77px;height:20px;background:#e95420"></div><div class="a" style="left:0;top:159px;width:40px;height:20px;background:#e95420"></div>
<div class="ch" style="left:40px;width:76px;color:#fff;font-weight:bold;font-size:14.5px">A</div>
<div class="ch" style="left:117px;width:76px">B</div>
<div class="ch" style="left:194px;width:76px">C</div>
<div class="ch" style="left:271px;width:76px">D</div>
<div class="ch" style="left:348px;width:76px">E</div>
<div class="ch" style="left:425px;width:76px">F</div>
<div class="ch" style="left:502px;width:76px">G</div>
<div class="ch" style="left:579px;width:141px">H</div>
<div class="ch" style="left:721px;width:186px">I</div>
<div class="ch" style="left:908px;width:76px">J</div>
<div class="ch" style="left:985px;width:76px">K</div>
<div class="ch" style="left:1062px;width:76px">L</div>
<div class="ch" style="left:1139px;width:76px">M</div>
<div class="ch" style="left:1216px;width:76px">N</div>
<div class="ch" style="left:1293px;width:76px">O</div>
<div class="ch" style="left:1370px;width:76px">P</div>
<div class="ch" style="left:1447px;width:76px">Q</div>
<div class="ch" style="left:1524px;width:76px">R</div>
<div class="ch" style="left:1601px;width:76px">S</div>
<div class="ch" style="left:1678px;width:76px">T</div>
<div class="rh" style="top:159px;color:#fff;font-weight:bold">1</div>
<div class="rh" style="top:179px">2</div>
<div class="rh" style="top:199px">3</div>
<div class="rh" style="top:219px">4</div>
<div class="rh" style="top:239px">5</div>
<div class="rh" style="top:259px">6</div>
<div class="rh" style="top:279px">7</div>
<div class="rh" style="top:299px">8</div>
<div class="rh" style="top:319px">9</div>
<div class="rh" style="top:339px">10</div>
<div class="rh" style="top:359px">11</div>
<div class="rh" style="top:379px">12</div>
<div class="rh" style="top:399px">13</div>
<div class="rh" style="top:419px">14</div>
<div class="rh" style="top:439px">15</div>
<div class="rh" style="top:459px">16</div>
<div class="rh" style="top:479px">17</div>
<div class="rh" style="top:499px">18</div>
<div class="rh" style="top:519px">19</div>
<div class="rh" style="top:539px">20</div>
<div class="rh" style="top:559px">21</div>
<div class="rh" style="top:579px">22</div>
<div class="rh" style="top:599px">23</div>
<div class="rh" style="top:619px">24</div>
<div class="rh" style="top:639px">25</div>
<div class="rh" style="top:659px">26</div>
<div class="rh" style="top:679px">27</div>
<div class="rh" style="top:699px">28</div>
<div class="rh" style="top:719px">29</div>
<div class="rh" style="top:739px">30</div>
<div class="rh" style="top:759px">31</div>
<div class="rh" style="top:779px">32</div>
<div class="rh" style="top:799px">33</div>
<div class="rh" style="top:819px">34</div>
<div class="rh" style="top:839px">35</div>
<div class="rh" style="top:859px">36</div>
<div class="rh" style="top:879px">37</div>
<div class="rh" style="top:899px">38</div>
<div class="rh" style="top:919px">39</div>
<div class="rh" style="top:939px">40</div>
<div class="a" style="left:502px;top:179px;width:867px;height:39px;background:#fff"></div>
<div class="a b" style="left:502px;top:179px;width:867px;height:39px;line-height:30px;text-align:center;font-family:'DejaVu Sans','Liberation Sans',sans-serif;font-size:26.67px;color:#000;white-space:nowrap;padding-top:9px">Sales Category Report</div>
<div class="a" style="left:579px;top:259px;width:328px;height:19px;background:#fff"></div>
<div class="a" style="left:1216px;top:259px;width:153px;height:19px;background:#fff"></div>
<div class="c" style="left:579px;top:262px;width:328px;letter-spacing:0.426px;padding-left:0.43px">2022-12-01</div>
<div class="c" style="left:1216px;top:262px;width:153px;letter-spacing:0.426px;padding-left:0.43px">2022-12-17</div>
<div class="c" style="left:503px;top:259px;width:76px;letter-spacing:0.491px;text-align:left;font-size:16px">From:</div>
<div class="c" style="left:1140px;top:259px;width:76px;letter-spacing:0.349px;text-align:left;font-size:16px">To:</div>
<div class="a" style="left:501px;top:298px;width:869px;height:20px;background:#c0daf9"></div>
<div class="c b" style="left:502px;top:302px;width:867px;letter-spacing:0.514px;padding-left:0.51px">All / Saleable / Office Furniture</div>
<div class="a" style="left:501px;top:318px;width:869px;height:21px;background:#6ca5ff"></div>
<div class="a" style="left:501px;top:338px;width:869px;height:261px;background:#bed5fd"></div>
<div class="hl" style="left:501px;top:318px;width:869px;background:#000"></div>
<div class="hl" style="left:501px;top:338px;width:869px;background:#000"></div>
<div class="hl" style="left:501px;top:358px;width:869px;background:#000"></div>
<div class="hl" style="left:501px;top:378px;width:869px;background:#000"></div>
<div class="hl" style="left:501px;top:398px;width:869px;background:#000"></div>
<div class="hl" style="left:501px;top:418px;width:869px;background:#000"></div>
<div class="hl" style="left:501px;top:438px;width:869px;background:#000"></div>
<div class="hl" style="left:501px;top:458px;width:869px;background:#000"></div>
<div class="hl" style="left:501px;top:478px;width:869px;background:#000"></div>
<div class="hl" style="left:501px;top:498px;width:869px;background:#000"></div>
<div class="hl" style="left:501px;top:518px;width:869px;background:#000"></div>
<div class="hl" style="left:501px;top:538px;width:869px;background:#000"></div>
<div class="hl" style="left:501px;top:558px;width:869px;background:#000"></div>
<div class="hl" style="left:501px;top:578px;width:869px;background:#000"></div>
<div class="hl" style="left:501px;top:598px;width:869px;background:#000"></div>
<div class="vl" style="left:501px;top:318px;height:281px;background:#000"></div>
<div class="vl" style="left:578px;top:318px;height:281px;background:#000"></div>
<div class="vl" style="left:720px;top:318px;height:281px;background:#000"></div>
<div class="vl" style="left:907px;top:318px;height:281px;background:#000"></div>
<div class="vl" style="left:984px;top:318px;height:281px;background:#000"></div>
<div class="vl" style="left:1061px;top:318px;height:281px;background:#000"></div>
<div class="vl" style="left:1138px;top:318px;height:281px;background:#000"></div>
<div class="vl" style="left:1215px;top:318px;height:281px;background:#000"></div>
<div class="vl" style="left:1292px;top:318px;height:281px;background:#000"></div>
<div class="vl" style="left:1369px;top:318px;height:281px;background:#000"></div>
<div class="c b" style="left:502px;top:322px;width:76px;letter-spacing:0.447px;padding-left:0.45px">Order</div>
<div class="c b" style="left:579px;top:322px;width:141px;letter-spacing:0.517px;padding-left:0.52px">Date</div>
<div class="c b" style="left:721px;top:322px;width:186px;letter-spacing:0.437px;padding-left:0.44px">Product</div>
<div class="c b" style="left:908px;top:322px;width:76px;letter-spacing:1.471px;padding-left:1.47px">UOM</div>
<div class="c b" style="left:985px;top:322px;width:76px;letter-spacing:0.526px;padding-left:0.53px">Quantity</div>
<div class="c b" style="left:1062px;top:322px;width:76px;letter-spacing:0.584px;padding-left:0.58px">Price</div>
<div class="c b" style="left:1139px;top:322px;width:76px;letter-spacing:0.847px;padding-left:0.85px">Tax(%)</div>
<div class="c b" style="left:1216px;top:322px;width:76px;letter-spacing:0.537px;padding-left:0.54px">Subtotal</div>
<div class="c b" style="left:1293px;top:322px;width:76px;letter-spacing:0.725px;padding-left:0.72px">Total</div>
<div class="c" style="left:502px;top:342px;width:76px;letter-spacing:0.368px;padding-left:0.37px">S00011</div>
<div class="c" style="left:579px;top:342px;width:141px;letter-spacing:0.345px;padding-left:0.34px">2022-11-26 04:31:41</div>
<div class="c" style="left:721px;top:342px;width:186px;letter-spacing:0.498px;padding-left:0.50px">Acoustic Bloc Screens</div>
<div class="c" style="left:908px;top:342px;width:76px;letter-spacing:0.464px;padding-left:0.46px">Units</div>
<div class="c" style="left:985px;top:342px;width:76px;letter-spacing:0.365px;padding-left:0.37px">3</div>
<div class="c" style="left:1062px;top:342px;width:76px;letter-spacing:0.365px;padding-left:0.37px">295</div>
<div class="c" style="left:1139px;top:342px;width:76px;letter-spacing:0.365px;padding-left:0.37px">0</div>
<div class="c" style="left:1216px;top:342px;width:76px;letter-spacing:0.365px;padding-left:0.37px">735</div>
<div class="c" style="left:1293px;top:342px;width:76px;letter-spacing:0.365px;padding-left:0.37px">735</div>
<div class="c" style="left:502px;top:362px;width:76px;letter-spacing:0.368px;padding-left:0.37px">S00011</div>
<div class="c" style="left:579px;top:362px;width:141px;letter-spacing:0.345px;padding-left:0.34px">2022-11-26 04:31:41</div>
<div class="c" style="left:721px;top:362px;width:186px;letter-spacing:0.505px;padding-left:0.50px">Office Chair Black</div>
<div class="c" style="left:908px;top:362px;width:76px;letter-spacing:0.464px;padding-left:0.46px">Units</div>
<div class="c" style="left:985px;top:362px;width:76px;letter-spacing:0.365px;padding-left:0.37px">3</div>
<div class="c" style="left:1062px;top:362px;width:76px;letter-spacing:0.329px;padding-left:0.33px">120.5</div>
<div class="c" style="left:1139px;top:362px;width:76px;letter-spacing:0.365px;padding-left:0.37px">0</div>
<div class="c" style="left:1216px;top:362px;width:76px;letter-spacing:0.329px;padding-left:0.33px">361.5</div>
<div class="c" style="left:1293px;top:362px;width:76px;letter-spacing:0.329px;padding-left:0.33px">361.5</div>
<div class="c" style="left:502px;top:382px;width:76px;letter-spacing:0.368px;padding-left:0.37px">S00017</div>
<div class="c" style="left:579px;top:382px;width:141px;letter-spacing:0.345px;padding-left:0.34px">2022-11-19 04:31:41</div>
<div class="c" style="left:721px;top:382px;width:186px;letter-spacing:0.498px;padding-left:0.50px">Acoustic Bloc Screens</div>
<div class="c" style="left:908px;top:382px;width:76px;letter-spacing:0.464px;padding-left:0.46px">Units</div>
<div class="c" style="left:985px;top:382px;width:76px;letter-spacing:0.365px;padding-left:0.37px">2</div>
<div class="c" style="left:1062px;top:382px;width:76px;letter-spacing:0.365px;padding-left:0.37px">295</div>
<div class="c" style="left:1139px;top:382px;width:76px;letter-spacing:0.365px;padding-left:0.37px">0</div>
<div class="c" style="left:1216px;top:382px;width:76px;letter-spacing:0.365px;padding-left:0.37px">710</div>
<div class="c" style="left:1293px;top:382px;width:76px;letter-spacing:0.365px;padding-left:0.37px">710</div>
<div class="c" style="left:502px;top:402px;width:76px;letter-spacing:0.368px;padding-left:0.37px">S00017</div>
<div class="c" style="left:579px;top:402px;width:141px;letter-spacing:0.345px;padding-left:0.34px">2022-11-19 04:31:41</div>
<div class="c" style="left:721px;top:402px;width:186px;letter-spacing:0.505px;padding-left:0.50px">Office Chair Black</div>
<div class="c" style="left:908px;top:402px;width:76px;letter-spacing:0.464px;padding-left:0.46px">Units</div>
<div class="c" style="left:985px;top:402px;width:76px;letter-spacing:0.365px;padding-left:0.37px">2</div>
<div class="c" style="left:1062px;top:402px;width:76px;letter-spacing:0.329px;padding-left:0.33px">120.5</div>
<div class="c" style="left:1139px;top:402px;width:76px;letter-spacing:0.365px;padding-left:0.37px">0</div>
<div class="c" style="left:1216px;top:402px;width:76px;letter-spacing:0.365px;padding-left:0.37px">241</div>
<div class="c" style="left:1293px;top:402px;width:76px;letter-spacing:0.365px;padding-left:0.37px">241</div>
<div class="c" style="left:502px;top:422px;width:76px;letter-spacing:0.368px;padding-left:0.37px">S00019</div>
<div class="c" style="left:579px;top:422px;width:141px;letter-spacing:0.345px;padding-left:0.34px">2022-11-17 04:31:00</div>
<div class="c" style="left:721px;top:422px;width:186px;letter-spacing:0.498px;padding-left:0.50px">Acoustic Bloc Screens</div>
<div class="c" style="left:908px;top:422px;width:76px;letter-spacing:0.464px;padding-left:0.46px">Units</div>
<div class="c" style="left:985px;top:422px;width:76px;letter-spacing:0.365px;padding-left:0.37px">3</div>
<div class="c" style="left:1062px;top:422px;width:76px;letter-spacing:0.365px;padding-left:0.37px">295</div>
<div class="c" style="left:1139px;top:422px;width:76px;letter-spacing:0.365px;padding-left:0.37px">0</div>
<div class="c" style="left:1216px;top:422px;width:76px;letter-spacing:0.365px;padding-left:0.37px">885</div>
<div class="c" style="left:1293px;top:422px;width:76px;letter-spacing:0.365px;padding-left:0.37px">885</div>
<div class="c" style="left:502px;top:442px;width:76px;letter-spacing:0.368px;padding-left:0.37px">S00019</div>
<div class="c" style="left:579px;top:442px;width:141px;letter-spacing:0.345px;padding-left:0.34px">2022-11-17 04:31:00</div>
<div class="c" style="left:721px;top:442px;width:186px;letter-spacing:0.512px;padding-left:0.51px">Office Lamp</div>
<div class="c" style="left:908px;top:442px;width:76px;letter-spacing:0.464px;padding-left:0.46px">Units</div>
<div class="c" style="left:985px;top:442px;width:76px;letter-spacing:0.365px;padding-left:0.37px">5</div>
<div class="c" style="left:1062px;top:442px;width:76px;letter-spacing:0.365px;padding-left:0.37px">40</div>
<div class="c" style="left:1139px;top:442px;width:76px;letter-spacing:0.365px;padding-left:0.37px">0</div>
<div class="c" style="left:1216px;top:442px;width:76px;letter-spacing:0.365px;padding-left:0.37px">725</div>
<div class="c" style="left:1293px;top:442px;width:76px;letter-spacing:0.365px;padding-left:0.37px">725</div>
<div class="c" style="left:502px;top:462px;width:76px;letter-spacing:0.368px;padding-left:0.37px">S00019</div>
<div class="c" style="left:579px;top:462px;width:141px;letter-spacing:0.345px;padding-left:0.34px">2022-11-17 04:31:00</div>
<div class="c" style="left:721px;top:462px;width:186px;letter-spacing:0.531px;padding-left:0.53px">Office Chair</div>
<div class="c" style="left:908px;top:462px;width:76px;letter-spacing:0.464px;padding-left:0.46px">Units</div>
<div class="c" style="left:985px;top:462px;width:76px;letter-spacing:0.365px;padding-left:0.37px">2</div>
<div class="c" style="left:1062px;top:462px;width:76px;letter-spacing:0.365px;padding-left:0.37px">70</div>
<div class="c" style="left:1139px;top:462px;width:76px;letter-spacing:0.365px;padding-left:0.37px">0</div>
<div class="c" style="left:1216px;top:462px;width:76px;letter-spacing:0.365px;padding-left:0.37px">130</div>
<div class="c" style="left:1293px;top:462px;width:76px;letter-spacing:0.365px;padding-left:0.37px">130</div>
<div class="c" style="left:502px;top:482px;width:76px;letter-spacing:0.368px;padding-left:0.37px">S00005</div>
<div class="c" style="left:579px;top:482px;width:141px;letter-spacing:0.345px;padding-left:0.34px">2022-11-17 04:31:00</div>
<div class="c" style="left:721px;top:482px;width:186px;letter-spacing:0.512px;padding-left:0.51px">Office Lamp</div>
<div class="c" style="left:908px;top:482px;width:76px;letter-spacing:0.464px;padding-left:0.46px">Units</div>
<div class="c" style="left:985px;top:482px;width:76px;letter-spacing:0.365px;padding-left:0.37px">1</div>
<div class="c" style="left:1062px;top:482px;width:76px;letter-spacing:0.365px;padding-left:0.37px">40</div>
<div class="c" style="left:1139px;top:482px;width:76px;letter-spacing:0.365px;padding-left:0.37px">0</div>
<div class="c" style="left:1216px;top:482px;width:76px;letter-spacing:0.365px;padding-left:0.37px">405</div>
<div class="c" style="left:1293px;top:482px;width:76px;letter-spacing:0.365px;padding-left:0.37px">405</div>
<div class="c" style="left:502px;top:502px;width:76px;letter-spacing:0.368px;padding-left:0.37px">S00001</div>
<div class="c" style="left:579px;top:502px;width:141px;letter-spacing:0.345px;padding-left:0.34px">2022-11-17 04:31:00</div>
<div class="c" style="left:721px;top:502px;width:186px;letter-spacing:0.498px;padding-left:0.50px">Acoustic Bloc Screens</div>
<div class="c" style="left:908px;top:502px;width:76px;letter-spacing:0.464px;padding-left:0.46px">Units</div>
<div class="c" style="left:985px;top:502px;width:76px;letter-spacing:0.365px;padding-left:0.37px">3</div>
<div class="c" style="left:1062px;top:502px;width:76px;letter-spacing:0.365px;padding-left:0.37px">295</div>
<div class="c" style="left:1139px;top:502px;width:76px;letter-spacing:0.365px;padding-left:0.37px">0</div>
<div class="c" style="left:1216px;top:502px;width:76px;letter-spacing:0.365px;padding-left:0.37px">885</div>
<div class="c" style="left:1293px;top:502px;width:76px;letter-spacing:0.365px;padding-left:0.37px">885</div>
<div class="c" style="left:502px;top:522px;width:76px;letter-spacing:0.368px;padding-left:0.37px">S00001</div>
<div class="c" style="left:579px;top:522px;width:141px;letter-spacing:0.345px;padding-left:0.34px">2022-11-17 04:31:00</div>
<div class="c" style="left:721px;top:522px;width:186px;letter-spacing:0.512px;padding-left:0.51px">Office Lamp</div>
<div class="c" style="left:908px;top:522px;width:76px;letter-spacing:0.464px;padding-left:0.46px">Units</div>
<div class="c" style="left:985px;top:522px;width:76px;letter-spacing:0.365px;padding-left:0.37px">5</div>
<div class="c" style="left:1062px;top:522px;width:76px;letter-spacing:0.365px;padding-left:0.37px">40</div>
<div class="c" style="left:1139px;top:522px;width:76px;letter-spacing:0.365px;padding-left:0.37px">0</div>
<div class="c" style="left:1216px;top:522px;width:76px;letter-spacing:0.365px;padding-left:0.37px">725</div>
<div class="c" style="left:1293px;top:522px;width:76px;letter-spacing:0.365px;padding-left:0.37px">725</div>
<div class="c" style="left:502px;top:542px;width:76px;letter-spacing:0.368px;padding-left:0.37px">S00001</div>
<div class="c" style="left:579px;top:542px;width:141px;letter-spacing:0.345px;padding-left:0.34px">2022-11-17 04:31:00</div>
<div class="c" style="left:721px;top:542px;width:186px;letter-spacing:0.531px;padding-left:0.53px">Office Chair</div>
<div class="c" style="left:908px;top:542px;width:76px;letter-spacing:0.464px;padding-left:0.46px">Units</div>
<div class="c" style="left:985px;top:542px;width:76px;letter-spacing:0.365px;padding-left:0.37px">2</div>
<div class="c" style="left:1062px;top:542px;width:76px;letter-spacing:0.365px;padding-left:0.37px">70</div>
<div class="c" style="left:1139px;top:542px;width:76px;letter-spacing:0.365px;padding-left:0.37px">0</div>
<div class="c" style="left:1216px;top:542px;width:76px;letter-spacing:0.365px;padding-left:0.37px">130</div>
<div class="c" style="left:1293px;top:542px;width:76px;letter-spacing:0.365px;padding-left:0.37px">130</div>
<div class="c" style="left:502px;top:562px;width:76px;letter-spacing:0.368px;padding-left:0.37px">S00018</div>
<div class="c" style="left:579px;top:562px;width:141px;letter-spacing:0.345px;padding-left:0.34px">2022-11-12 04:31:41</div>
<div class="c" style="left:721px;top:562px;width:186px;letter-spacing:0.498px;padding-left:0.50px">Acoustic Bloc Screens</div>
<div class="c" style="left:908px;top:562px;width:76px;letter-spacing:0.464px;padding-left:0.46px">Units</div>
<div class="c" style="left:985px;top:562px;width:76px;letter-spacing:0.365px;padding-left:0.37px">2</div>
<div class="c" style="left:1062px;top:562px;width:76px;letter-spacing:0.365px;padding-left:0.37px">295</div>
<div class="c" style="left:1139px;top:562px;width:76px;letter-spacing:0.365px;padding-left:0.37px">0</div>
<div class="c" style="left:1216px;top:562px;width:76px;letter-spacing:0.365px;padding-left:0.37px">590</div>
<div class="c" style="left:1293px;top:562px;width:76px;letter-spacing:0.365px;padding-left:0.37px">590</div>
<div class="c" style="left:502px;top:582px;width:76px;letter-spacing:0.368px;padding-left:0.37px">S00018</div>
<div class="c" style="left:579px;top:582px;width:141px;letter-spacing:0.345px;padding-left:0.34px">2022-11-12 04:31:41</div>
<div class="c" style="left:721px;top:582px;width:186px;letter-spacing:0.505px;padding-left:0.50px">Office Chair Black</div>
<div class="c" style="left:908px;top:582px;width:76px;letter-spacing:0.464px;padding-left:0.46px">Units</div>
<div class="c" style="left:985px;top:582px;width:76px;letter-spacing:0.365px;padding-left:0.37px">2</div>
<div class="c" style="left:1062px;top:582px;width:76px;letter-spacing:0.329px;padding-left:0.33px">120.5</div>
<div class="c" style="left:1139px;top:582px;width:76px;letter-spacing:0.365px;padding-left:0.37px">0</div>
<div class="c" style="left:1216px;top:582px;width:76px;letter-spacing:0.365px;padding-left:0.37px">241</div>
<div class="c" style="left:1293px;top:582px;width:76px;letter-spacing:0.365px;padding-left:0.37px">241</div>
<div class="a" style="left:907px;top:598px;width:78px;height:21px;border:1px solid #000;background:#fff"></div>
<div class="c b" style="left:908px;top:602px;width:76px;letter-spacing:0.725px;padding-left:0.72px">Total</div>
<div class="a" style="left:984px;top:598px;width:78px;height:21px;border:1px solid #000;background:#fff"></div>
<div class="c b" style="left:985px;top:602px;width:76px;letter-spacing:0.650px;padding-left:0.65px">35</div>
<div class="a" style="left:1061px;top:598px;width:78px;height:21px;border:1px solid #000;background:#fff"></div>
<div class="c b" style="left:1062px;top:602px;width:76px;letter-spacing:0.616px;padding-left:0.62px">2096.5</div>
<div class="a" style="left:1215px;top:598px;width:78px;height:21px;border:1px solid #000;background:#fff"></div>
<div class="c b" style="left:1216px;top:602px;width:76px;letter-spacing:0.616px;padding-left:0.62px">6763.5</div>
<div class="a" style="left:1292px;top:598px;width:78px;height:21px;border:1px solid #000;background:#fff"></div>
<div class="c b" style="left:1293px;top:602px;width:76px;letter-spacing:0.616px;padding-left:0.62px">6763.5</div>
<svg class="a" style="left:36px;top:154px" width="90" height="32" viewBox="36 154 90 32"><rect x="40.600" y="159.350" width="75.700" height="18.700" fill="none" stroke="#000" stroke-width="1.500"/><rect x="113.900" y="175.900" width="5.100" height="5.200" fill="#000"/></svg>
<div class="a" style="left:1788px;top:138px;width:13px;height:820px;background:#d2d2d2"></div>
<div class="a" style="left:1788px;top:138px;width:13px;height:6px;background:#b0b0b0"></div>
<div class="a" style="left:1791px;top:140px;width:6px;height:1px;background:#111"></div><div class="a" style="left:1791px;top:141px;width:6px;height:1px;background:#666"></div>
<div class="a" style="left:1791px;top:149px;width:6px;height:390px;background:#878787;border-radius:3px"></div>
<div class="a" style="left:0;top:958px;width:1788px;height:13px;background:#d2d2d2"></div>
<div class="a" style="left:3px;top:962px;width:843px;height:6px;background:#878787;border-radius:3px"></div>
<div class="a" style="left:1783px;top:958px;width:5px;height:13px;background:#c4c4c4"></div>
<div class="a" style="left:1785px;top:961px;width:1px;height:7px;background:#111"></div>
<div class="a" style="left:142px;top:971px;width:65px;height:25px;background:#fff"></div>
<div class="a" style="left:142px;top:993px;width:65px;height:3px;background:#acacac"></div>
<div class="bx" style="left:154px;top:973px;font-size:12.2px">Sheet1</div>
<svg class="a" style="left:0;top:971px" width="140" height="25" viewBox="0 971 140 25"><path d="M13 975.200v15.500" stroke="#adadad" stroke-width="1.200"/><path d="M22.300 975.200v15.500l-8.300-7.750z" fill="#adadad"/><path d="M46.200 975.200v15.500l-8.400-7.750z" fill="#adadad"/><path d="M62.700 975.200v15.500l7.900-7.750z" fill="#adadad"/><path d="M87 975.200v15.500l8.300-7.750z" fill="#adadad"/><path d="M96.600 975.200v15.500" stroke="#adadad" stroke-width="1.200"/><path d="M123.500 975.200v16.600M115 983.500h17" stroke="#303030" stroke-width="3.200"/></svg>
<div class="a" style="left:0;top:996px;width:1845px;height:1px;background:#c6c6c6"></div>
<div class="sb" style="left:9px">Sheet 1 of 1</div>
<div class="sb" style="left:571px">PageStyle_Sheet1</div>
<div class="sb" style="left:996.5px">English (India)</div>
<div class="sb" style="left:1451.5px">Average: ; Sum: 0</div>
<div class="sb" style="left:1806.5px">100%</div>
<div class="sbs" style="left:282px"></div>
<div class="sbs" style="left:562px"></div>
<div class="sbs" style="left:884px"></div>
<div class="sbs" style="left:1184px"></div>
<div class="sbs" style="left:1251px"></div>
<div class="sbs" style="left:1280px"></div>
<div class="sbs" style="left:1309px"></div>
<div class="sbs" style="left:1338px"></div>
<div class="sbs" style="left:1655px"></div>
<div class="sbs" style="left:1798px"></div>
<svg class="a" style="left:1240px;top:997px" width="605" height="20" viewBox="1240 997 605 20"><path d="M1258.500 1003h4M1260.500 1003v9M1258.500 1012h4M1266.500 1012.500h5.500" stroke="#555" stroke-width="1" fill="none"/><rect x="1289.500" y="1002.500" width="12" height="9.500" fill="#ddd" stroke="#8a8a8a"/><path d="M1294.300 1004h2.400v2.800h2l-3.200 3.400-3.200-3.400h2z" fill="#555"/><path d="M1665 1008h8.500" stroke="#666" stroke-width="1.200"/><path d="M1680 1008h97" stroke="#7a7a7a" stroke-width="1.200"/><circle cx="1727.500" cy="1008" r="4.600" fill="#f7f7f7" stroke="#7a7a7a" stroke-width="1.100"/><path d="M1782.500 1008h8.500M1786.750 1003.750v8.500" stroke="#666" stroke-width="1.200"/></svg>
<div class="a" style="left:1800px;top:104px;width:46px;height:891px;border:1px solid #bdbdbd;border-right:none;background:#f7f7f7"></div><div class="a" style="left:1806px;top:105px;width:1px;height:889px;background:#c4c4c4"></div><div class="a" style="left:1801px;top:105px;width:1px;height:889px;background:#fdfdfd"></div><div class="a" style="left:1801px;top:513px;width:6px;height:73px;background:#9b9b9b"></div><svg class="a" style="left:1800px;top:540px" width="8" height="20" viewBox="1800 540 8 20"><path d="M1801.200 546.200l4.800 3.400-4.800 3.400z" fill="#f4f4f4"/></svg><svg class="a" style="left:1800px;top:104px" width="45" height="230" viewBox="1800 104 45 230"><g transform="translate(1827 123.800)"><rect x="-2.400" y="-10.300" width="4.400" height="6" rx="0.800" transform="rotate(22)" fill="#b0b0b0" stroke="#b0b0b0" stroke-width="1.500"/><rect x="-2.400" y="-10.300" width="4.400" height="6" rx="0.800" transform="rotate(67)" fill="#b0b0b0" stroke="#b0b0b0" stroke-width="1.500"/><rect x="-2.400" y="-10.300" width="4.400" height="6" rx="0.800" transform="rotate(112)" fill="#b0b0b0" stroke="#b0b0b0" stroke-width="1.500"/><rect x="-2.400" y="-10.300" width="4.400" height="6" rx="0.800" transform="rotate(157)" fill="#b0b0b0" stroke="#b0b0b0" stroke-width="1.500"/><rect x="-2.400" y="-10.300" width="4.400" height="6" rx="0.800" transform="rotate(202)" fill="#b0b0b0" stroke="#b0b0b0" stroke-width="1.500"/><rect x="-2.400" y="-10.300" width="4.400" height="6" rx="0.800" transform="rotate(247)" fill="#b0b0b0" stroke="#b0b0b0" stroke-width="1.500"/><rect x="-2.400" y="-10.300" width="4.400" height="6" rx="0.800" transform="rotate(292)" fill="#b0b0b0" stroke="#b0b0b0" stroke-width="1.500"/><rect x="-2.400" y="-10.300" width="4.400" height="6" rx="0.800" transform="rotate(337)" fill="#b0b0b0" stroke="#b0b0b0" stroke-width="1.500"/><circle r="7.900" fill="#b0b0b0" stroke="#b0b0b0" stroke-width="1.500"/><rect x="-2.400" y="-10.300" width="4.400" height="6" rx="0.800" transform="rotate(22)" fill="#e6e6e6"/><rect x="-2.400" y="-10.300" width="4.400" height="6" rx="0.800" transform="rotate(67)" fill="#e6e6e6"/><rect x="-2.400" y="-10.300" width="4.400" height="6" rx="0.800" transform="rotate(112)" fill="#e6e6e6"/><rect x="-2.400" y="-10.300" width="4.400" height="6" rx="0.800" transform="rotate(157)" fill="#e6e6e6"/><rect x="-2.400" y="-10.300" width="4.400" height="6" rx="0.800" transform="rotate(202)" fill="#e6e6e6"/><rect x="-2.400" y="-10.300" width="4.400" height="6" rx="0.800" transform="rotate(247)" fill="#e6e6e6"/><rect x="-2.400" y="-10.300" width="4.400" height="6" rx="0.800" transform="rotate(292)" fill="#e6e6e6"/><rect x="-2.400" y="-10.300" width="4.400" height="6" rx="0.800" transform="rotate(337)" fill="#e6e6e6"/><circle r="7.900" fill="#e6e6e6"/><circle r="5.300" fill="#d4d4d4" stroke="#c0c0c0" stroke-width="0.800"/><circle r="2.900" fill="#fbfbfb" stroke="#b0b0b0" stroke-width="0.900"/></g><path d="M1816 143.500h22" stroke="#dfdfdf" stroke-width="1"/><rect x="1817.500" y="153.500" width="19" height="19" rx="1.500" fill="url(#gDoc2)" stroke="#9a9aa6"/><rect x="1820" y="160" width="14" height="7" rx="3.500" fill="#3f97ee"/><circle cx="1830.300" cy="163.500" r="2.900" fill="#f4f4f4" stroke="#c9c9c9" stroke-width="0.500"/><defs><linearGradient id="gDoc2" x1="0" y1="0" x2="0" y2="1"><stop offset="0" stop-color="#f6f6f6"/><stop offset="1" stop-color="#dadada"/></linearGradient></defs><text x="1815.500" y="202.200" font-family="Liberation Sans, DejaVu Sans, sans-serif" font-size="22.500" font-weight="bold" fill="#474747">A</text><path d="M1838.300 192.200l1.600 1.300-5.600 8.300-2.400-1.700z" fill="#c4641c"/><path d="M1838.300 192.200l1.600 1.300-1.600 2.400-2-1z" fill="#e08a3a"/><path d="M1831.900 200.100l2.400 1.700-3.400 4.200c-1.300 1.500-2.800 2.200-5.300 2.200 1.800-1 2.600-2 3.300-3.800z" fill="#ececec" stroke="#b5b5b5" stroke-width="0.400"/><path d="M1825.200 208.400c2.300 0.200 4.200-0.600 5.500-2.200l-2-1.800c-0.700 1.900-1.700 3-3.500 4z" fill="#e645cf"/><rect x="-10" y="-8" width="20" height="16" transform="translate(1826.500 233) rotate(-7)" fill="#f4f4f4" stroke="#a9b9cc" stroke-width="0.700"/><rect x="-8.500" y="-6.500" width="17" height="13" transform="translate(1826.500 233) rotate(-7)" fill="#3b8fe3"/><rect x="1817.500" y="226.500" width="20.500" height="16" fill="#f6f6f6" stroke="#a8a8a8"/><rect x="1819.300" y="228.300" width="17" height="12.400" fill="#f4a62e"/><path d="M1819.300 228.300h17v5.500c-3-1.300-5 0.900-8 0.300s-5-1.600-9 0.200z" fill="#3b98ea"/><path d="M1819.300 234.300c4-1.800 6-0.800 9-0.200s5-1.600 8-0.300v1.100c-3-1-5 0.900-8 0.300s-5-1.200-9 0.300z" fill="#fff"/><path d="M1824 236l0.500 1.100 1.200 0.100-0.900 0.800 0.300 1.200-1.100-0.600-1.100 0.600 0.300-1.200-0.900-0.800 1.200-0.100z" fill="#e1261c"/><defs><linearGradient id="gRim" x1="0" y1="0" x2="0" y2="1"><stop offset="0" stop-color="#ececec"/><stop offset="1" stop-color="#8e8e8e"/></linearGradient></defs><ellipse cx="1827" cy="278.300" rx="8" ry="1.300" fill="#000" opacity="0.120"/><circle cx="1827" cy="267.800" r="10.400" fill="url(#gRim)" stroke="#8a8a8a" stroke-width="0.700"/><circle cx="1827" cy="267.800" r="7.700" fill="#36456a" stroke="#27324e" stroke-width="0.700"/><path d="M1829.600 260.800l-0.900 6.400-3 1.400z" fill="#e8303a"/><path d="M1820.300 264.500l6.400 1.600 1.300 2.900z" fill="#e8303a" opacity="0.850"/><path d="M1824.400 274.800l0.900-6.400 3-1.400z" fill="#f4f4f4"/><path d="M1833.700 271.100l-6.400-1.600-1.300-2.900z" fill="#dfe3ee" opacity="0.900"/><circle cx="1827" cy="267.800" r="1.100" fill="#f4f4f4"/><rect x="1811.500" y="287.500" width="31" height="31" rx="4" fill="#f9f9f9" stroke="#cdcdcd"/><text x="1818.300" y="311.800" font-family="Liberation Sans, DejaVu Sans, sans-serif" font-size="24" fill="#3c3c3c" stroke="#3c3c3c" stroke-width="0.500">f</text><text x="1826.300" y="312.300" font-family="Liberation Sans, DejaVu Sans, sans-serif" font-size="10.500" fill="#3c3c3c" stroke="#3c3c3c" stroke-width="0.350" textLength="12.500" lengthAdjust="spacingAndGlyphs">(x)</text></svg>
</body></html>
